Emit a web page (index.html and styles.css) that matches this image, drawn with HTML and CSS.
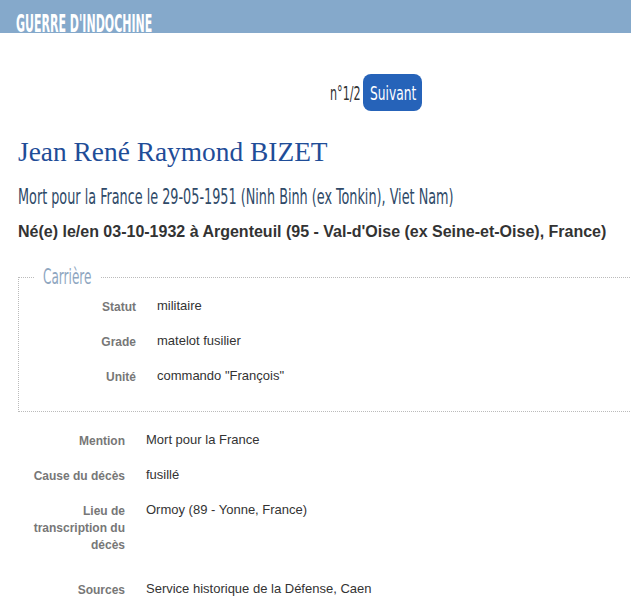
FILE: index.html
```html
<!DOCTYPE html>
<html lang="fr">
<head>
    <meta charset="UTF-8">
    <title>Jean René Raymond BIZET</title>
    <link rel="stylesheet" href="styles.css">
</head>
<body>
    <header class="banner">
        <h2 class="banner-title"><span class="squeeze">GUERRE D'INDOCHINE</span></h2>
    </header>

    <div class="page">
        <div class="pager">
            <span class="pager-count squeeze">n°1/2</span>
            <button class="btn-next"><span class="squeeze">Suivant</span></button>
        </div>

        <h1 class="person-name">Jean René Raymond BIZET</h1>
        <p class="death"><span class="squeeze">Mort pour la France le 29-05-1951 (Ninh Binh (ex Tonkin), Viet Nam)</span></p>
        <p class="birth">Né(e) le/en 03-10-1932 à Argenteuil (95 - Val-d'Oise (ex Seine-et-Oise), France)</p>

        <fieldset class="career">
            <legend><span class="squeeze">Carrière</span></legend>
            <div class="info-row">
                <div class="info-label">Statut</div>
                <div class="info-value">militaire</div>
            </div>
            <div class="info-row">
                <div class="info-label">Grade</div>
                <div class="info-value">matelot fusilier</div>
            </div>
            <div class="info-row">
                <div class="info-label">Unité</div>
                <div class="info-value">commando "François"</div>
            </div>
        </fieldset>

        <div class="details">
            <div class="info-row">
                <div class="info-label">Mention</div>
                <div class="info-value">Mort pour la France</div>
            </div>
            <div class="info-row">
                <div class="info-label">Cause du décès</div>
                <div class="info-value">fusillé</div>
            </div>
            <div class="info-row tall">
                <div class="info-label">Lieu de transcription du décès</div>
                <div class="info-value">Ormoy (89 - Yonne, France)</div>
            </div>
            <div class="info-row">
                <div class="info-label">Sources</div>
                <div class="info-value">Service historique de la Défense, Caen</div>
            </div>
        </div>
    </div>
</body>
</html>
```
FILE: styles.css
```css
body {
    margin: 0;
    font-family: "Liberation Sans", Arial, sans-serif;
    color: #333;
    background: #fff;
    overflow-x: hidden;
}
/* narrow display face: no condensed font installed, so squeeze one */
.squeeze {
    display: inline-block;
    font-family: "DejaVu Sans Condensed", "DejaVu Sans", sans-serif;
    transform: scaleX(var(--sx, 0.65));
    transform-origin: left center;
    white-space: nowrap;
}
.banner {
    background-color: #85a9cb;
    height: 33px;
    overflow: hidden;
}
.banner-title {
    margin: 0;
    padding: 12px 0 0 16px;
    color: #fff;
    font-size: 24px;
    font-weight: bold;
    line-height: 24px;
    --sx: 0.51;
}
.page {
    width: 752px;
    padding: 0 18px;
    box-sizing: border-box;
}
.pager {
    display: flex;
    align-items: center;
    padding: 41px 0 0 330px;
    margin-left: -18px;
}
.pager-count {
    width: 33px;
    font-size: 20px;
    color: #333;
    --sx: 0.62;
}
.btn-next {
    background-color: #2663b9;
    color: #fff;
    border: none;
    border-radius: 8px;
    width: 59px;
    height: 37px;
    padding: 0 0 0 7px;
    font-size: 20px;
    text-align: left;
    cursor: pointer;
    --sx: 0.68;
}
.person-name {
    margin: 26px 0 0;
    font-family: "Liberation Serif", "Times New Roman", serif;
    font-weight: normal;
    font-size: 27.4px;
    color: #1f4d98;
}
.death {
    margin: 17px 0 0;
    font-size: 21px;
    color: #2f4a68;
    --sx: 0.678;
}
.birth {
    margin: 14px 0 0;
    font-size: 16px;
    font-weight: bold;
    color: #333;
}
.career {
    margin: 25px 0 0;
    padding: 1px 10px 17px;
    border: 1px dotted #bbb;
}
.career legend {
    margin-left: 5px;
    padding: 0 9px;
    font-size: 21px;
    color: #8ea6bf;
    line-height: 22px;
    width: 48px;
    --sx: 0.64;
}
.info-row {
    display: grid;
    grid-template-columns: 107px 1fr;
    column-gap: 21px;
    padding: 8px 0;
    line-height: 17px;
}
.info-label {
    text-align: right;
    font-size: 12px;
    font-weight: bold;
    color: #777;
    padding-top: 2px;
}
.info-value {
    font-size: 13px;
    color: #333;
}
.details {
    padding-top: 11px;
}
.tall {
    padding-bottom: 18px;
}
```
